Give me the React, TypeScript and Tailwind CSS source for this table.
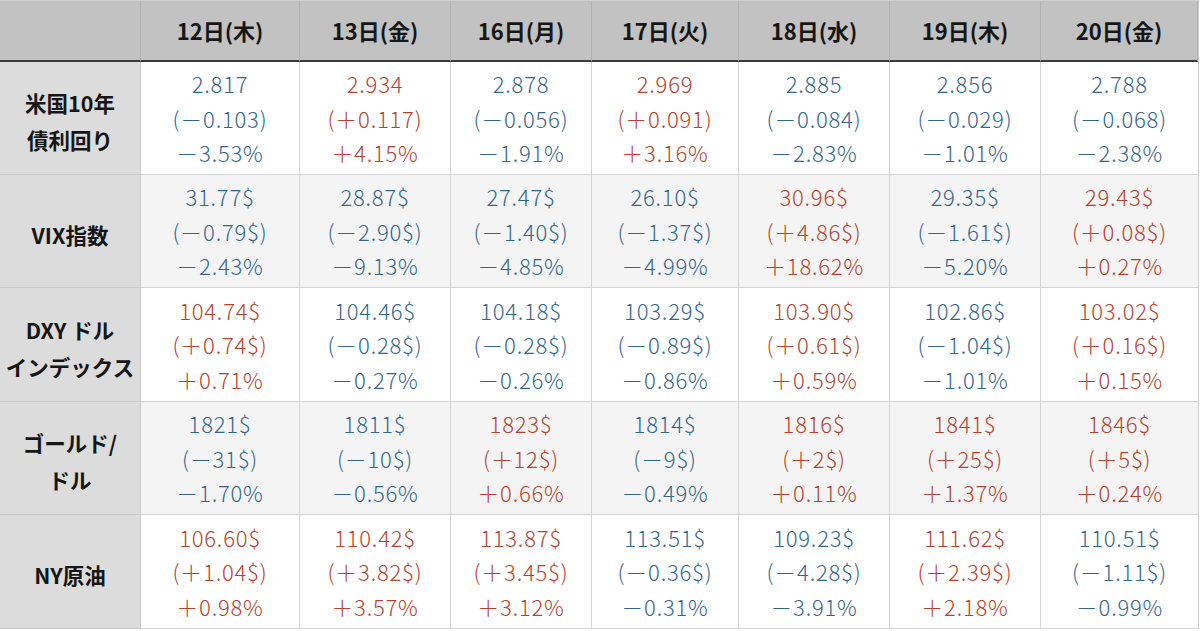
import clsx from 'clsx';

type Cell = [string, string, string];

const days = ['12日(木)', '13日(金)', '16日(月)', '17日(火)', '18日(水)', '19日(木)', '20日(金)'];

const rows: { label: string[]; cells: Cell[] }[] = [
  {
    label: ['米国10年', '債利回り'],
    cells: [
      ['2.817', '(-0.103)', '-3.53%'],
      ['2.934', '(+0.117)', '+4.15%'],
      ['2.878', '(-0.056)', '-1.91%'],
      ['2.969', '(+0.091)', '+3.16%'],
      ['2.885', '(-0.084)', '-2.83%'],
      ['2.856', '(-0.029)', '-1.01%'],
      ['2.788', '(-0.068)', '-2.38%'],
    ],
  },
  {
    label: ['VIX指数'],
    cells: [
      ['31.77$', '(-0.79$)', '-2.43%'],
      ['28.87$', '(-2.90$)', '-9.13%'],
      ['27.47$', '(-1.40$)', '-4.85%'],
      ['26.10$', '(-1.37$)', '-4.99%'],
      ['30.96$', '(+4.86$)', '+18.62%'],
      ['29.35$', '(-1.61$)', '-5.20%'],
      ['29.43$', '(+0.08$)', '+0.27%'],
    ],
  },
  {
    label: ['DXY ドル', 'インデックス'],
    cells: [
      ['104.74$', '(+0.74$)', '+0.71%'],
      ['104.46$', '(-0.28$)', '-0.27%'],
      ['104.18$', '(-0.28$)', '-0.26%'],
      ['103.29$', '(-0.89$)', '-0.86%'],
      ['103.90$', '(+0.61$)', '+0.59%'],
      ['102.86$', '(-1.04$)', '-1.01%'],
      ['103.02$', '(+0.16$)', '+0.15%'],
    ],
  },
  {
    label: ['ゴールド/', 'ドル'],
    cells: [
      ['1821$', '(-31$)', '-1.70%'],
      ['1811$', '(-10$)', '-0.56%'],
      ['1823$', '(+12$)', '+0.66%'],
      ['1814$', '(-9$)', '-0.49%'],
      ['1816$', '(+2$)', '+0.11%'],
      ['1841$', '(+25$)', '+1.37%'],
      ['1846$', '(+5$)', '+0.24%'],
    ],
  },
  {
    label: ['NY原油'],
    cells: [
      ['106.60$', '(+1.04$)', '+0.98%'],
      ['110.42$', '(+3.82$)', '+3.57%'],
      ['113.87$', '(+3.45$)', '+3.12%'],
      ['113.51$', '(-0.36$)', '-0.31%'],
      ['109.23$', '(-4.28$)', '-3.91%'],
      ['111.62$', '(+2.39$)', '+2.18%'],
      ['110.51$', '(-1.11$)', '-0.99%'],
    ],
  },
];

// full-width signs like the source table
const wide = (s: string) => s.replace('-', '－').replace('+', '＋');

const rowHeights = ['h-[113px]', 'h-[113px]', 'h-[114px]', 'h-[113px]', 'h-[114px]'];

export default function App() {
  return (
    <div
      className="w-[1200px] h-[631px] bg-white overflow-hidden"
      style={{ fontFamily: '"Noto Sans CJK JP", "Noto Sans", sans-serif' }}
    >
      <div className="grid grid-cols-[141px_159px_151px_141px_147px_151px_151px_157px] w-[1199px] border-t border-r border-[#cfcfcf]">
        {/* header */}
        <div className="h-[61px] bg-[#c1c2c1] border-r border-b-2 border-r-[#b3b3b3] border-b-[#3a3a3a]" />
        {days.map((d) => (
          <div
            key={d}
            className="h-[61px] bg-[#c1c2c1] border-r border-b-2 border-r-[#b3b3b3] border-b-[#3a3a3a] last:border-r-0 flex items-center justify-center text-[22px] font-bold text-[#161616]"
          >
            {d}
          </div>
        ))}

        {rows.map((row, ri) => (
          <div key={ri} className="contents">
            <div
              className={clsx(
                rowHeights[ri],
                'bg-[#dcdcdc] border-r border-b border-[#c9c9c9] flex flex-col items-center justify-center pt-[6px] text-[21.5px] font-bold leading-[37px] text-[#161616]'
              )}
            >
              {row.label.map((l) => (
                <div key={l}>{l}</div>
              ))}
            </div>
            {row.cells.map((c, ci) => {
              const up = c[1].includes('+');
              return (
                <div
                  key={ci}
                  className={clsx(
                    rowHeights[ri],
                    'border-r border-b border-[#d4d4d4] last:border-r-0 flex flex-col items-center justify-center text-[22px] font-light leading-[34.5px] tracking-[0.8px]',
                    ri % 2 === 1 ? 'bg-[#f4f4f4]' : 'bg-white',
                    up ? 'text-[#b9412f]' : 'text-[#33668f]'
                  )}
                >
                  <div>{c[0]}</div>
                  <div>{wide(c[1])}</div>
                  <div>{wide(c[2])}</div>
                </div>
              );
            })}
          </div>
        ))}
      </div>
    </div>
  );
}
